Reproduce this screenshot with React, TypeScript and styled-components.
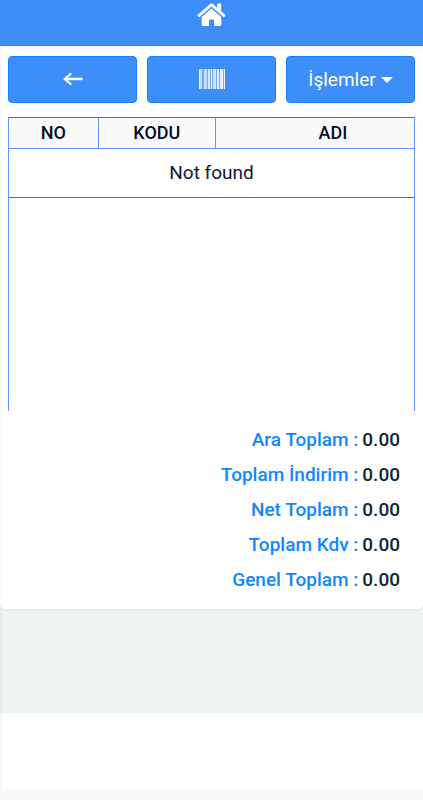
import React from "react";
import styled, { createGlobalStyle } from "styled-components";

const GlobalStyle = createGlobalStyle`
  *, *::before, *::after { box-sizing: border-box; }
  html { background: #f8f8f8; }
  body {
    margin: 0;
    font-family: Roboto, "Liberation Sans", sans-serif;
    font-size: 19px;
    line-height: 24px;
    color: #0c1a2e;
  }
`;

const Page = styled.div`
  min-height: 100vh;
  display: flex;
  flex-direction: column;
  padding-bottom: 10px;
`;

const Header = styled.header`
  display: flex;
  justify-content: center;
  align-items: flex-start;
  height: 46px;
  background: #3d8ef8;
  border-bottom: 1px solid #1a83f5;
`;

const HomeLink = styled.a`
  display: flex;
  padding-top: 3px;
  color: #fff;
`;

const Content = styled.main`
  flex: 1;
  display: flex;
  flex-direction: column;
  background: linear-gradient(to right, #f5f5f5, #fff 4px);
`;

const Backdrop = styled.div`
  background: linear-gradient(to right, #e6eaea, #eff3f4 4px);
  padding-bottom: 104px;
`;

const Card = styled.section`
  background: linear-gradient(#f7f7f7, transparent 5px),
    linear-gradient(to right, #f8f8f8, #fff 4px);
  border-radius: 0 0 5px 5px;
  box-shadow: 0 1px 2px #dfe4e5;
  padding: 10px 8px 12px;
`;

const Toolbar = styled.div`
  display: grid;
  grid-template-columns: repeat(3, 1fr);
  gap: 10px;
  margin-bottom: 14px;
`;

const ToolButton = styled.button`
  display: flex;
  align-items: center;
  justify-content: center;
  gap: 5px;
  height: 47px;
  padding: 0;
  border: 1px solid #1683fa;
  border-radius: 4px;
  background: #3d8ef8;
  color: #fff;
  font: inherit;
  svg { margin-bottom: 2px; }
`;

const Caret = styled.span`
  border: 6px solid transparent;
  border-top-color: #fff;
  border-bottom: 0;
`;

const GridFrame = styled.div`
  height: 294px;
  border: solid #5f9af8;
  border-width: 0 1px;
  overflow: hidden;
`;

const Grid = styled.table`
  width: 100%;
  table-layout: fixed;
  border-collapse: collapse;
`;

const HeadCell = styled.th<{ $width?: string; $inset?: number }>`
  width: ${(p) => p.$width ?? "auto"};
  height: 31px;
  padding: 0 0 0 ${(p) => p.$inset ?? 0}px;
  border: 1px solid #5f96f5;
  border-top-color: #1678e8;
  background: #f9f9f9;
  color: #050d26;
  font-size: 18px;
  font-weight: 500;
  &:first-child { border-left: 0; }
  &:last-child { border-right: 0; }
`;

const EmptyCell = styled.td`
  height: 49px;
  padding: 0;
  border-bottom: 1px solid #1678e8;
  color: #101735;
  text-align: center;
`;

const Totals = styled.dl`
  margin: 0;
  padding: 11px 15px 0 0;
`;

const TotalRow = styled.div`
  display: flex;
  justify-content: flex-end;
  align-items: center;
  gap: 4px;
  height: 35px;
  font-weight: 500;
`;

const TotalLabel = styled.dt`
  color: #1287fb;
`;

const TotalValue = styled.dd`
  margin: 0;
  color: #0c2733;
`;

const HomeIcon = () => (
  <svg width="29" height="24" viewBox="0 0 29 24" fill="currentColor" aria-hidden="true">
    <path d="M13 1.1a2.2 2.2 0 0 1 3 0L20.2 4.8V1.3Q20.2.6 20.9.6h2.6q.7 0 .7.7v7l3.9 3.4q.7.6.2 1.2l-.8.9q-.6.6-1.2.1L14.5 3.5 2.7 13.9q-.6.5-1.2-.1l-.8-.9q-.5-.6.2-1.2Z" />
    <path d="m14.5 5.5 9.8 8.6v7.4q0 1.4-1.4 1.4h-5.8v-5.7q0-.8-.8-.8h-3.6q-.8 0-.8.8v5.7H6.1q-1.4 0-1.4-1.4v-7.4Z" />
  </svg>
);

const ArrowIcon = () => (
  <svg width="20" height="14" viewBox="0 0 20 14" fill="none" stroke="#fff" strokeLinecap="round" strokeLinejoin="round" aria-hidden="true">
    <path d="M2 7h16.5" strokeWidth="2.5" />
    <path d="M7.5 2 1.7 7l5.8 5" strokeWidth="2.3" />
  </svg>
);

const bars = [
  [0, 1, 0.8], [1, 2, 0.6], [5, 3, 0.6], [9, 2, 0.75], [12, 1, 0.9],
  [14, 2, 0.65], [16, 1, 0.8], [18, 2, 0.8], [21, 3, 0.8], [25, 1, 0.9],
];

const BarcodeIcon = () => (
  <svg width="26" height="20" viewBox="0 0 26 20" fill="#fff" aria-hidden="true">
    <rect width="26" height="20" opacity=".25" />
    {bars.map(([x, width, opacity]) => (
      <rect key={x} x={x} width={width} height="20" opacity={opacity} />
    ))}
  </svg>
);

const totals = [
  ["Ara Toplam", "0.00"],
  ["Toplam İndirim", "0.00"],
  ["Net Toplam", "0.00"],
  ["Toplam Kdv", "0.00"],
  ["Genel Toplam", "0.00"],
];

export default function App() {
  return (
    <Page lang="tr">
      <GlobalStyle />
      <Header>
        <HomeLink href="#" aria-label="Ana sayfa"><HomeIcon /></HomeLink>
      </Header>
      <Content>
        <Backdrop>
          <Card>
            <Toolbar>
              <ToolButton type="button" aria-label="Geri"><ArrowIcon /></ToolButton>
              <ToolButton type="button" aria-label="Barkod"><BarcodeIcon /></ToolButton>
              <ToolButton type="button" aria-haspopup="menu">İşlemler <Caret /></ToolButton>
            </Toolbar>
            <GridFrame>
              <Grid>
                <thead>
                  <tr>
                    <HeadCell scope="col" $width="22%">NO</HeadCell>
                    <HeadCell scope="col" $width="29%">KODU</HeadCell>
                    <HeadCell scope="col" $inset={36}>ADI</HeadCell>
                  </tr>
                </thead>
                <tbody>
                  <tr><EmptyCell colSpan={3}>Not found</EmptyCell></tr>
                </tbody>
              </Grid>
            </GridFrame>
            <Totals>
              {totals.map(([label, value]) => (
                <TotalRow key={label}>
                  <TotalLabel>{label} :</TotalLabel>
                  <TotalValue>{value}</TotalValue>
                </TotalRow>
              ))}
            </Totals>
          </Card>
        </Backdrop>
      </Content>
    </Page>
  );
}
